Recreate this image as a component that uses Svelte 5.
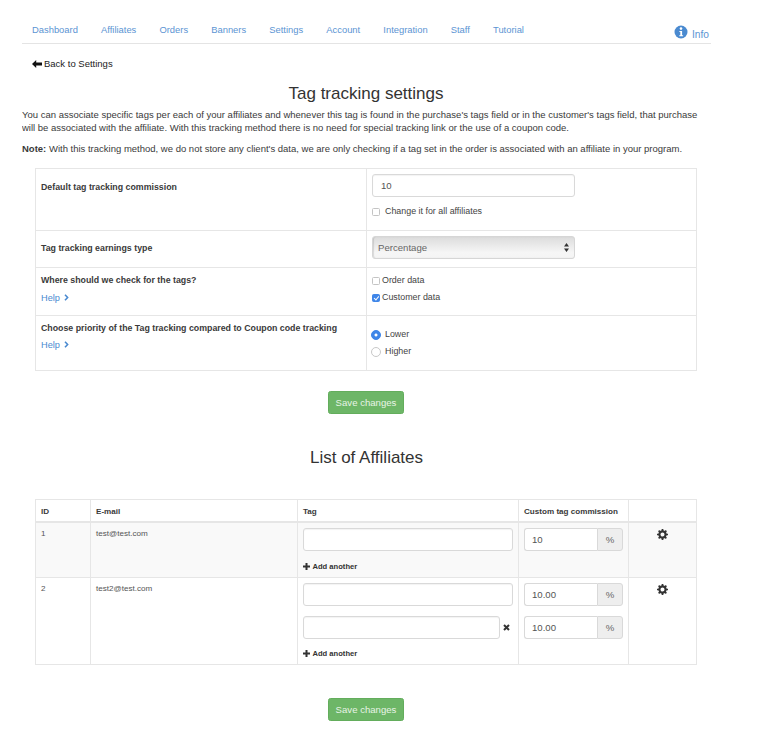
<script>
	const navLinks = ['Dashboard', 'Affiliates', 'Orders', 'Banners', 'Settings', 'Account', 'Integration', 'Staff', 'Tutorial'];

	// rows of the affiliates table, one tag/commission pair per entry
	const affiliates = [
		{ id: 1, email: 'test@test.com', tags: [{ commission: '10' }] },
		{ id: 2, email: 'test2@test.com', tags: [{ commission: '10.00' }, { commission: '10.00', removable: true }] }
	];

	let commission = $state('10');
	let changeAll = $state(false);
	let earningsType = $state('Percentage');
	let orderData = $state(false);
	let customerData = $state(true);
	let priority = $state('lower');
</script>

{#snippet chevron()}
	<svg class="chevron" width="5" height="7" viewBox="0 0 5 7"><path d="M1 .8 3.6 3.5 1 6.2" fill="none" stroke="currentColor" stroke-width="1.6" /></svg>
{/snippet}

{#snippet cog()}
	<svg width="11" height="11" viewBox="0 0 12 12">
		<circle cx="6" cy="6" r="3.4" fill="none" stroke="#333" stroke-width="2.4" />
		<path d="M6 0v12M0 6h12M1.8 1.8l8.4 8.4M10.2 1.8l-8.4 8.4" stroke="#333" stroke-width="1.9" stroke-dasharray="2.2 7.6" />
	</svg>
{/snippet}

{#snippet addAnother()}
	<a class="add" href="#add">
		<svg width="7" height="7" viewBox="0 0 7 7"><path d="M3.5 0v7M0 3.5h7" stroke="#333" stroke-width="2" /></svg>
		Add another
	</a>
{/snippet}

<div class="page">
	<nav>
		<ul>
			{#each navLinks as link}
				<li><a href="#nav">{link}</a></li>
			{/each}
		</ul>
		<a class="info" href="#info">
			<svg width="14" height="14" viewBox="0 0 14 14">
				<circle cx="7" cy="7" r="6.5" fill="#4a8ad0" />
				<circle cx="7" cy="3.6" r="1.3" fill="#fff" />
				<path d="M5.4 6h2.7v4.2h1v1.1H5.3v-1.1h1V7.1h-.9z" fill="#fff" />
			</svg>
			Info
		</a>
	</nav>

	<a class="back" href="#back">
		<svg width="10" height="8" viewBox="0 0 10 8"><path d="M0 4 4.2 0v2.4H10v3.2H4.2V8z" fill="#111" /></svg>
		Back to Settings
	</a>

	<h1>Tag tracking settings</h1>
	<p>You can associate specific tags per each of your affiliates and whenever this tag is found in the purchase's tags field or in the customer's tags field, that purchase will be associated with the affiliate. With this tracking method there is no need for special tracking link or the use of a coupon code.</p>
	<p class="note"><b>Note:</b> With this tracking method, we do not store any client's data, we are only checking if a tag set in the order is associated with an affiliate in your program.</p>

	<table class="settings">
		<tbody>
			<tr class="r1">
				<th>Default tag tracking commission</th>
				<td>
					<input class="field" type="text" bind:value={commission} />
					<label class="check all"><input type="checkbox" bind:checked={changeAll} /> Change it for all affiliates</label>
				</td>
			</tr>
			<tr class="r2">
				<th class="mid">Tag tracking earnings type</th>
				<td>
					<div class="select">
						<select bind:value={earningsType}>
							<option>Percentage</option>
							<option>Fixed</option>
						</select>
						<svg width="5" height="9" viewBox="0 0 5 9"><path d="M2.5 0 5 3.6H0zM2.5 9 0 5.4h5z" fill="#333" /></svg>
					</div>
				</td>
			</tr>
			<tr class="r3">
				<th>
					Where should we check for the tags?
					<a class="help" href="#help">Help {@render chevron()}</a>
				</th>
				<td class="boxes">
					<label class="check tight"><input type="checkbox" bind:checked={orderData} /> Order data</label>
					<label class="check tight"><input type="checkbox" bind:checked={customerData} /> Customer data</label>
				</td>
			</tr>
			<tr class="r4">
				<th>
					Choose priority of the Tag tracking compared to Coupon code tracking
					<a class="help close" href="#help">Help {@render chevron()}</a>
				</th>
				<td class="radios">
					<label class="check"><input type="radio" name="priority" value="lower" bind:group={priority} /> Lower</label>
					<label class="check"><input type="radio" name="priority" value="higher" bind:group={priority} /> Higher</label>
				</td>
			</tr>
		</tbody>
	</table>

	<div class="actions first"><button type="button">Save changes</button></div>

	<h2>List of Affiliates</h2>

	<table class="list">
		<colgroup>
			<col style="width: 55px" />
			<col style="width: 207px" />
			<col style="width: 221px" />
			<col style="width: 110px" />
			<col style="width: 68px" />
		</colgroup>
		<thead>
			<tr>
				<th>ID</th>
				<th>E-mail</th>
				<th>Tag</th>
				<th>Custom tag commission</th>
				<th></th>
			</tr>
		</thead>
		<tbody>
			{#each affiliates as affiliate}
				<tr class:odd={affiliate.id === 1}>
					<td>{affiliate.id}</td>
					<td>{affiliate.email}</td>
					<td>
						{#each affiliate.tags as tag}
							<div class="tag-row">
								<input class="field" type="text" />
								{#if tag.removable}
									<svg width="7" height="7" viewBox="0 0 7 7"><path d="M1 1l5 5M6 1 1 6" stroke="#333" stroke-width="2" /></svg>
								{/if}
							</div>
						{/each}
						{@render addAnother()}
					</td>
					<td>
						{#each affiliate.tags as tag}
							<div class="group">
								<input type="text" value={tag.commission} />
								<span>%</span>
							</div>
						{/each}
					</td>
					<td class="cog">{@render cog()}</td>
				</tr>
			{/each}
		</tbody>
	</table>

	<div class="actions second"><button type="button">Save changes</button></div>
</div>

<style>
	:global(body) {
		background: #fff;
		color: #3a3a3a;
		font-family: "Liberation Sans", Arial, sans-serif;
		font-size: 9.5px;
		line-height: 13.7px;
	}

	a {
		text-decoration: none;
	}

	.page {
		width: 689px;
		height: 749px;
		margin-left: 22px;
		overflow: hidden;
	}

	nav {
		display: flex;
		justify-content: space-between;
		align-items: flex-end;
		height: 43px;
		border-bottom: 1px solid #e4e4e4;
	}

	nav ul {
		display: flex;
		gap: 23.15px;
		margin: 0;
		padding: 0 0 6px 10px;
		list-style: none;
	}

	nav a {
		color: #5b94d3;
		font-size: 9.4px;
	}

	.info {
		display: flex;
		align-items: flex-end;
		gap: 4px;
		padding: 0 2px 3px 0;
		font-size: 10.2px;
		line-height: 11px;
	}

	.info svg {
		margin-bottom: 1px;
	}

	.back {
		display: flex;
		align-items: center;
		gap: 2px;
		margin: 13px 0 0 10px;
		color: #222;
		font-size: 9.5px;
	}

	h1, h2 {
		margin: 0;
		text-align: center;
		color: #333;
		font-weight: 500;
		font-size: 17px;
		line-height: 20px;
	}

	h1 {
		margin: 13px 0 0 -1px;
	}

	h2 {
		margin-top: 34px;
	}

	p {
		margin: 4px 0 6.6px;
	}

	.note {
		margin: 0;
	}

	table {
		width: 662px;
		margin-left: 13px;
		border-collapse: collapse;
		table-layout: fixed;
	}

	th, td {
		border: 1px solid #e6e6e6;
		vertical-align: top;
		text-align: left;
		font-size: 8.9px;
		padding: 5px;
	}

	th {
		font-weight: 700;
		font-size: 8.8px;
		color: #3a3a3a;
	}

	.settings {
		margin-top: 13px;
	}

	.settings th {
		width: 320px;
		padding-top: 12px;
	}

	.settings td {
		padding: 5px 5px 0;
	}

	.settings th.mid {
		vertical-align: middle;
		padding-top: 5px;
		padding-bottom: 7px;
	}

	.r1 { height: 62px; }
	.r2 { height: 37px; }
	.r3 { height: 48px; }
	.r4 { height: 55px; }

	.settings .r3 th, .settings .r4 th {
		padding-top: 6px;
	}

	.help {
		display: block;
		margin-top: 4px;
		color: #4a8ad0;
		font-weight: 400;
		font-size: 9.2px;
	}

	.help.close {
		margin-top: 3px;
	}

	.chevron {
		margin-left: 2px;
	}

	.field {
		display: block;
		box-sizing: border-box;
		width: 203px;
		height: 23px;
		padding: 0 8px;
		border: 1px solid #d9d9d9;
		border-radius: 3px;
		box-shadow: inset 0 1px 1px rgba(0, 0, 0, .05);
		background: #fff;
		color: #555;
		font: 9.6px "Liberation Sans", Arial, sans-serif;
	}

	.check {
		display: flex;
		align-items: center;
		gap: 4px;
		height: 17px;
		color: #444;
	}

	.all {
		gap: 5px;
		margin-top: 6px;
	}

	.tight {
		gap: 2px;
	}

	.settings td.boxes {
		padding-top: 4px;
	}

	input[type="checkbox"] {
		position: relative;
		appearance: none;
		box-sizing: border-box;
		width: 8px;
		height: 8px;
		margin: 0;
		border: 1px solid #c4c4c4;
		border-radius: 1.5px;
		background: #fff;
	}

	input[type="checkbox"]:checked {
		border-color: #3f86e8;
		background: #3f86e8;
	}

	input[type="checkbox"]:checked::after {
		content: "";
		position: absolute;
		left: 1.6px;
		top: 0;
		width: 1.5px;
		height: 4px;
		border: solid #fff;
		border-width: 0 1px 1px 0;
		transform: rotate(40deg);
	}

	input[type="radio"] {
		appearance: none;
		box-sizing: border-box;
		width: 10px;
		height: 10px;
		margin: 0 0 0 -1px;
		border: 1px solid #c8c8c8;
		border-radius: 50%;
		background: #fff;
	}

	input[type="radio"]:checked {
		border-color: #3f86e8;
		background: radial-gradient(circle, #fff 0 1.2px, #3f86e8 1.8px);
	}

	.settings td.radios {
		padding-top: 10px;
	}

	.select {
		position: relative;
		width: 203px;
		height: 23px;
	}

	.select select {
		appearance: none;
		box-sizing: border-box;
		width: 100%;
		height: 100%;
		padding: 0 5px;
		border: 1px solid #d6d6d6;
		border-radius: 3px;
		box-shadow: inset 1px 0 1px rgba(0, 0, 0, .12);
		background: linear-gradient(#dcdcdc, #f6f6f6 75%, #f4f4f4);
		color: #666;
		font: 9.6px "Liberation Sans", Arial, sans-serif;
	}

	.select svg {
		position: absolute;
		right: 6px;
		top: 7px;
		pointer-events: none;
	}

	.actions {
		display: flex;
		justify-content: center;
		margin-left: -1px;
	}

	.actions.first {
		margin-top: 20px;
	}

	.actions.second {
		margin-top: 33px;
	}

	button {
		box-sizing: border-box;
		width: 76px;
		height: 23px;
		padding: 0;
		border: 1px solid #63ad5c;
		border-radius: 2.5px;
		background: #6db667;
		color: #e8f4e6;
		font: 9.6px "Liberation Sans", Arial, sans-serif;
	}

	.list {
		width: 661px;
		margin-top: 31px;
	}

	.list thead th {
		padding: 5px 5px 2px;
		border-bottom-width: 2px;
		font-size: 8.1px;
	}

	.list td {
		padding: 5px 5px 6px;
		color: #555;
		font-size: 8.1px;
		line-height: 11px;
	}

	.list .odd td {
		background: #f9f9f9;
	}

	.tag-row {
		display: flex;
		align-items: center;
		gap: 3.5px;
		margin-bottom: 10px;
	}

	.tag-row + .tag-row {
		margin-bottom: 9px;
	}

	.tag-row .field {
		flex: 1;
		width: auto;
		min-width: 0;
		height: 23px;
	}

	.tag-row svg {
		margin-right: 3px;
	}

	.add {
		display: flex;
		align-items: center;
		gap: 2.5px;
		margin: 1px 0 -1px;
		color: #333;
		font-weight: 700;
		font-size: 7.6px;
		line-height: 11px;
	}

	.group {
		display: flex;
		width: 99px;
		height: 23px;
		margin-bottom: 10px;
	}

	.group input {
		box-sizing: border-box;
		width: 73px;
		height: 23px;
		padding: 0 7px;
		border: 1px solid #d9d9d9;
		border-right: 0;
		border-radius: 3px 0 0 3px;
		background: #fff;
		color: #555;
		font: 9.6px "Liberation Sans", Arial, sans-serif;
	}

	.group span {
		display: flex;
		align-items: center;
		justify-content: center;
		flex: 1;
		border: 1px solid #d9d9d9;
		border-radius: 0 3px 3px 0;
		background: #eee;
		color: #666;
		font-size: 9.6px;
	}

	.list td.cog {
		text-align: center;
		padding-top: 6px;
	}
</style>
